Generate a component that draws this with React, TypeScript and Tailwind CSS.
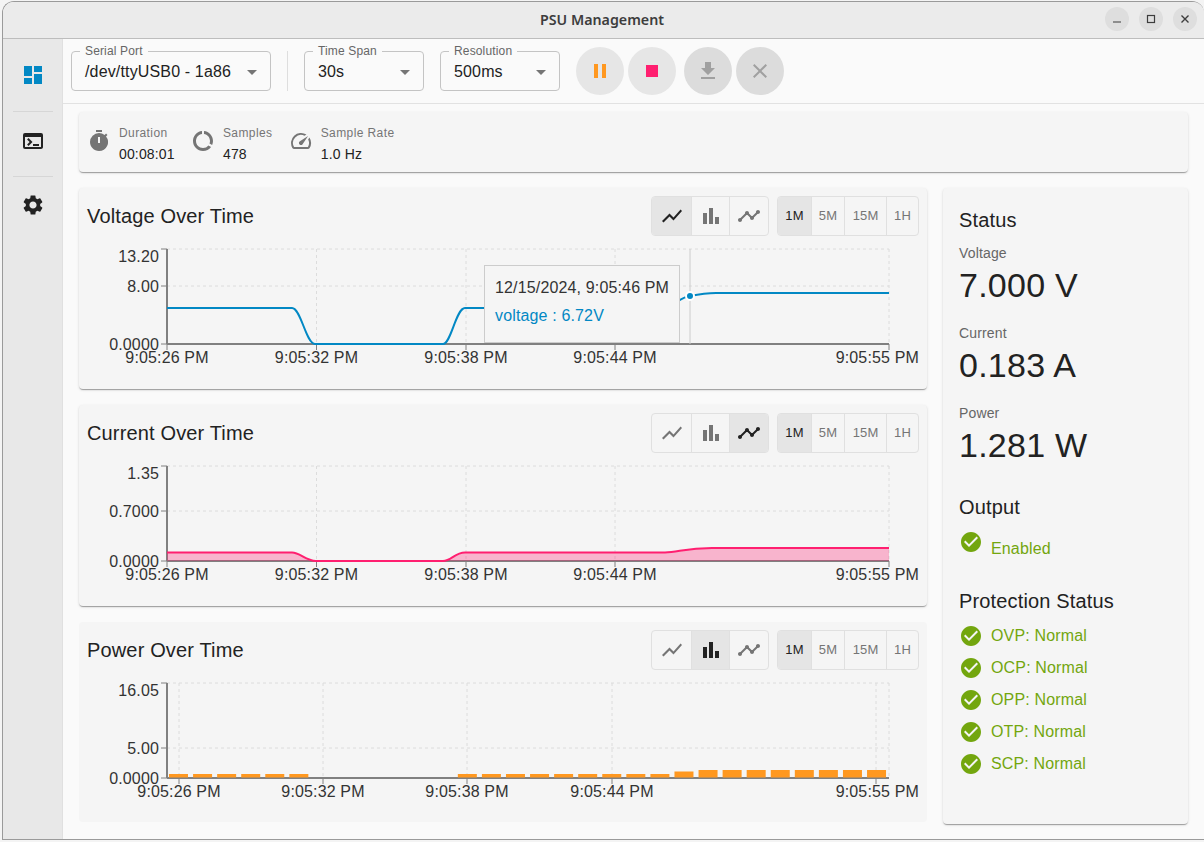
import React from 'react';
import {
  MdArrowDropDown,
  MdBarChart,
  MdCheckCircle,
  MdClose,
  MdDashboard,
  MdDataUsage,
  MdFileDownload,
  MdPause,
  MdSettings,
  MdShowChart,
  MdSpeed,
  MdStop,
  MdTerminal,
  MdTimeline,
  MdTimer,
} from 'react-icons/md';

const TIME_SPANS = ['1M', '5M', '15M', '1H'];
const PROTECTIONS = ['OVP', 'OCP', 'OPP', 'OTP', 'SCP'];

function SelectBox({ label, value, width }: { label: string; value: string; width: string }) {
  return (
    <div className={`relative flex h-10 items-center justify-between rounded border border-[#c4c4c4] pl-[13px] pr-[6px] pt-[2px] ${width}`}>
      <span className="absolute -top-[8px] left-[8px] bg-[#fafafa] px-[5px] text-[12px] leading-[14px] text-[#666]">{label}</span>
      <span className="text-[16px] text-[#222]">{value}</span>
      <MdArrowDropDown size={24} className="text-[#757575]" />
    </div>
  );
}

function RoundButton({ children, disabled }: { children: React.ReactNode; disabled?: boolean }) {
  return (
    <button className={`flex h-12 w-12 items-center justify-center rounded-full ${disabled ? 'bg-[#dcdcdc]' : 'bg-[#e6e6e6]'}`}>
      {children}
    </button>
  );
}

function Stat({ icon, label, value }: { icon: React.ReactNode; label: string; value: string }) {
  return (
    <div className="flex items-center gap-2">
      <span className="mb-[2px] text-[#757575]">{icon}</span>
      <div className="flex flex-col pt-[4px]">
        <span className="text-[12px] leading-[18px] tracking-[0.4px] text-[#757575]">{label}</span>
        <span className="mt-[2px] text-[14px] leading-[20px] text-[#222]">{value}</span>
      </div>
    </div>
  );
}

function ChartType({ active }: { active: number }) {
  const icons = [MdShowChart, MdBarChart, MdTimeline];
  const widths = ['w-[39px]', 'w-[38px]', 'w-[39px]'];
  return (
    <div className="flex h-10 overflow-hidden rounded border border-[#e0e0e0]">
      {icons.map((Icon, i) => (
        <div
          key={i}
          className={`flex items-center justify-center ${widths[i]} ${i > 0 ? 'border-l border-[#e0e0e0]' : ''} ${active === i ? 'bg-[#e5e5e5] text-[#222]' : 'text-[#757575]'}`}
        >
          <Icon size={24} />
        </div>
      ))}
    </div>
  );
}

function SpanGroup() {
  const widths = ['w-[33px]', 'w-[33px]', 'w-[42px]', 'w-[32px]'];
  return (
    <div className="flex h-10 overflow-hidden rounded border border-[#e0e0e0]">
      {TIME_SPANS.map((s, i) => (
        <div
          key={s}
          className={`flex items-center justify-center text-[13px] ${widths[i]} ${i > 0 ? 'border-l border-[#e0e0e0]' : ''} ${i === 0 ? 'bg-[#e5e5e5] text-[#222]' : 'text-[#757575]'}`}
        >
          {s}
        </div>
      ))}
    </div>
  );
}

type Tick = { y: number; label: string; textY: number };

function Axes({ top, bottom, yTicks, xTicks, gridX, labelY }: { top: number; bottom: number; yTicks: Tick[]; xTicks: number[]; gridX: number[]; labelY: number }) {
  const labels = ['9:05:26 PM', '9:05:32 PM', '9:05:38 PM', '9:05:44 PM'];
  return (
    <g>
      {yTicks.filter((t) => t.y !== bottom).map((t) => (
        <line key={t.y} x1={167} x2={889} y1={t.y} y2={t.y} stroke="#dcdcdc" strokeDasharray="3 3" />
      ))}
      {gridX.map((x) => (
        <line key={x} x1={x} x2={x} y1={top} y2={bottom} stroke="#dcdcdc" strokeDasharray="3 3" />
      ))}
      <line x1={167} x2={167} y1={top} y2={bottom} stroke="#808080" strokeWidth={2} />
      <line x1={167} x2={889} y1={bottom} y2={bottom} stroke="#808080" strokeWidth={2} />
      {yTicks.map((t) => (
        <g key={t.label}>
          <line x1={161} x2={167} y1={t.y} y2={t.y} stroke="#808080" />
          <text x={159} y={t.textY} textAnchor="end" className="fill-[#333] text-[16px]">{t.label}</text>
        </g>
      ))}
      {xTicks.map((x, i) => (
        <g key={x}>
          <line x1={x} x2={x} y1={bottom} y2={bottom + 6} stroke="#808080" />
          {i < 4 && <text x={x} y={labelY} textAnchor="middle" className="fill-[#333] text-[16px]">{labels[i]}</text>}
        </g>
      ))}
      <text x={919} y={labelY} textAnchor="end" className="fill-[#333] text-[16px]">9:05:55 PM</text>
    </g>
  );
}

function ChartCard({ title, active, height, base, children, overlay, flat }: { title: string; active: number; height: string; base: number; children: React.ReactNode; overlay?: React.ReactNode; flat?: boolean }) {
  return (
    <div className={`relative flex flex-col rounded bg-[#f5f5f5] ${height} ${flat ? '' : 'shadow-[0_2px_1px_-1px_rgba(0,0,0,0.2),0_1px_1px_0_rgba(0,0,0,0.14),0_1px_3px_0_rgba(0,0,0,0.12)]'}`}>
      <div className="flex items-center justify-between px-2 pt-2">
        <h2 className="text-[20px] text-[#222]">{title}</h2>
        <div className="flex gap-2">
          <ChartType active={active} />
          <SpanGroup />
        </div>
      </div>
      <svg viewBox={`79 ${base} 848 140`} width={848} height={140} className="mt-1 block">
        {children}
      </svg>
      {overlay}
    </div>
  );
}

const powerBars = (() => {
  const bars: { x: number; h: number }[] = [];
  for (let i = 0; i < 30; i++) {
    if (i > 5 && i < 12) continue;
    const h = i < 21 ? 3.5 : i === 21 ? 6 : 7.5;
    bars.push({ x: 169 + i * 24.07, h });
  }
  return bars;
})();

function StatusValue({ label, value }: { label: string; value: string }) {
  return (
    <div className="h-[80px]">
      <div className="text-[14px] leading-[20px] text-[#666]">{label}</div>
      <div className="mt-[1px] text-[34px] leading-[42px] tracking-[0.25px] text-[#222]">{value}</div>
    </div>
  );
}

export default function App() {
  return (
    <div className="h-[842px] w-[1204px] overflow-hidden bg-[#f4f4f4] pl-[2px] pt-[1px] font-['Liberation_Sans',Arial,sans-serif] tracking-[0.15px]">
      <div className="flex h-[839px] w-[1202px] flex-col overflow-hidden rounded-t-[12px] border border-r-0 border-[#9a9a9a] bg-[#fafafa]">
        {/* title bar */}
        <div className="relative flex h-[37px] shrink-0 items-center justify-center border-b border-[#bdbdbd] bg-[#ebebeb]">
          <span className="pr-[3px] font-['Noto_Sans',sans-serif] text-[14.25px] font-semibold tracking-normal text-[#3d3d3d]">PSU Management</span>
          <div className="absolute right-[7px] top-[5px] flex gap-[10px]">
            <span className="flex h-6 w-6 items-center justify-center rounded-full bg-[#dedede]">
              <svg width="10" height="10" viewBox="0 0 10 10"><path d="M1 8h8" stroke="#3d3d3d" strokeWidth="1.2" /></svg>
            </span>
            <span className="flex h-6 w-6 items-center justify-center rounded-full bg-[#dedede]">
              <svg width="10" height="10" viewBox="0 0 10 10"><rect x="1.5" y="1.5" width="7" height="7" fill="none" stroke="#3d3d3d" strokeWidth="1.2" /></svg>
            </span>
            <span className="flex h-6 w-6 items-center justify-center rounded-full bg-[#dedede]">
              <svg width="10" height="10" viewBox="0 0 10 10"><path d="M1.5 1.5l7 7M8.5 1.5l-7 7" stroke="#3d3d3d" strokeWidth="1.4" /></svg>
            </span>
          </div>
        </div>

        <div className="flex min-h-0 flex-1">
          {/* sidebar */}
          <aside className="flex w-[60px] shrink-0 flex-col items-center border-r border-[#e0e0e0] bg-[#e8e8e8]">
            <div className="flex h-[72px] w-full items-center justify-center text-[#0288c4]">
              <MdDashboard size={24} />
            </div>
            <div className="h-px w-10 bg-[#d6d6d6]" />
            <div className="flex h-[64px] items-center justify-center pb-[7px] text-[#222]"><MdTerminal size={24} /></div>
            <div className="h-px w-10 bg-[#d6d6d6]" />
            <div className="flex h-[56px] items-center justify-center text-[#222]"><MdSettings size={24} /></div>
          </aside>

          <main className="flex min-w-0 flex-1 flex-col">
            {/* toolbar */}
            <div className="flex h-[65px] shrink-0 items-center border-b border-[#e2e2e2] pl-2">
              <SelectBox label="Serial Port" value="/dev/ttyUSB0 - 1a86" width="w-[200px]" />
              <div className="mx-4 h-10 w-px bg-[#dedede]" />
              <SelectBox label="Time Span" value="30s" width="w-[120px]" />
              <div className="w-4" />
              <SelectBox label="Resolution" value="500ms" width="w-[120px]" />
              <div className="ml-4 flex gap-1">
                <RoundButton><MdPause size={24} className="text-[#ff9820]" /></RoundButton>
                <RoundButton><MdStop size={24} className="text-[#ff1f70]" /></RoundButton>
              </div>
              <div className="ml-2 flex gap-1">
                <RoundButton disabled><MdFileDownload size={24} className="text-[#a0a0a0]" /></RoundButton>
                <RoundButton disabled><MdClose size={24} className="text-[#a0a0a0]" /></RoundButton>
              </div>
            </div>

            {/* content */}
            <div className="flex flex-col px-4 pt-2">
              <div className="flex h-[60px] items-center gap-[16.25px] rounded bg-[#f5f5f5] pl-2 shadow-[0_2px_1px_-1px_rgba(0,0,0,0.2),0_1px_1px_0_rgba(0,0,0,0.14),0_1px_3px_0_rgba(0,0,0,0.12)]">
                <Stat icon={<MdTimer size={24} />} label="Duration" value="00:08:01" />
                <Stat icon={<MdDataUsage size={24} />} label="Samples" value="478" />
                <Stat icon={<MdSpeed size={24} />} label="Sample Rate" value="1.0 Hz" />
              </div>

              <div className="mt-4 flex gap-4">
                <div className="flex w-[848px] shrink-0 flex-col gap-4">
                  <ChartCard
                    title="Voltage Over Time"
                    active={0}
                    height="h-[201px]"
                    base={240}
                    overlay={
                      <div className="absolute left-[405px] top-[77px] flex h-[78px] w-[196px] flex-col border border-[#ccc] bg-[#f5f5f5] pl-[10px] pt-[10px] text-[16px] leading-[24px]">
                        <span className="text-[#333]">12/15/2024, 9:05:46 PM</span>
                        <span className="mt-[4px] text-[#0288c4]">voltage : 6.72V</span>
                      </div>
                    }
                  >
                    <Axes
                      top={249}
                      bottom={344}
                      labelY={363}
                      yTicks={[
                        { y: 249, label: '13.20', textY: 262 },
                        { y: 286, label: '8.00', textY: 292 },
                        { y: 344, label: '0.0000', textY: 350 },
                      ]}
                      xTicks={[167, 316.5, 466, 615, 889]}
                      gridX={[316.5, 466, 615, 889]}
                    />
                    <line x1={690} x2={690} y1={249} y2={344} stroke="#ccc" />
                    <path
                      d="M167 308L292 308C301 308 306 344 315 344L443 344C451 344 456 308 465 308L660 308C672 308 680 297 690 296C700 294 705 293 716 293L889 293"
                      fill="none"
                      stroke="#0288c4"
                      strokeWidth={2}
                    />
                    <circle cx={690} cy={296} r={4} fill="#0288c4" stroke="#fff" strokeWidth={2} />
                  </ChartCard>

                  <ChartCard title="Current Over Time" active={2} height="h-[201px]" base={457}>
                    <Axes
                      top={466}
                      bottom={561}
                      labelY={580}
                      yTicks={[
                        { y: 466, label: '1.35', textY: 479 },
                        { y: 511, label: '0.7000', textY: 517 },
                        { y: 561, label: '0.0000', textY: 567 },
                      ]}
                      xTicks={[167, 316.5, 466, 615, 889]}
                      gridX={[316.5, 466, 615, 889]}
                    />
                    <path
                      d="M167 552.5L292 552.5C300 552.5 306 561 316 561L443 561C451 561 455 552.5 465 552.5L665 552.5C678 552.5 685 548 712 548L889 548L889 561L167 561Z"
                      fill="#ff1f70"
                      fillOpacity={0.3}
                    />
                    <path
                      d="M167 552.5L292 552.5C300 552.5 306 561 316 561L443 561C451 561 455 552.5 465 552.5L665 552.5C678 552.5 685 548 712 548L889 548"
                      fill="none"
                      stroke="#ff1f70"
                      strokeWidth={2}
                    />
                  </ChartCard>

                  <ChartCard title="Power Over Time" active={1} height="h-[200px]" base={674} flat>
                    <Axes
                      top={683}
                      bottom={778}
                      labelY={797}
                      yTicks={[
                        { y: 683, label: '16.05', textY: 696 },
                        { y: 748, label: '5.00', textY: 754 },
                        { y: 778, label: '0.0000', textY: 784 },
                      ]}
                      xTicks={[179, 323, 467, 612, 876]}
                      gridX={[179, 323, 467, 612, 876, 889]}
                    />
                    {powerBars.map((b) => (
                      <rect key={b.x} x={b.x} y={777.5 - b.h} width={19} height={b.h} fill="#ff9820" />
                    ))}
                  </ChartCard>
                </div>

                {/* status panel */}
                <div className="h-[636px] w-[245px] shrink-0 rounded bg-[#f5f5f5] px-4 pt-[20px] shadow-[0_2px_1px_-1px_rgba(0,0,0,0.2),0_1px_1px_0_rgba(0,0,0,0.14),0_1px_3px_0_rgba(0,0,0,0.12)]">
                  <h3 className="mb-[11px] text-[20px] leading-[24px] text-[#222]">Status</h3>
                  <StatusValue label="Voltage" value="7.000 V" />
                  <StatusValue label="Current" value="0.183 A" />
                  <StatusValue label="Power" value="1.281 W" />
                  <h3 className="mt-[12px] text-[20px] leading-[24px] text-[#222]">Output</h3>
                  <div className="mt-[11px] flex h-[30px] items-start gap-2 text-[#73a60e]">
                    <MdCheckCircle size={24} />
                    <span className="mt-[10px] text-[16px] leading-[18px]">Enabled</span>
                  </div>
                  <h3 className="mt-[29px] text-[20px] leading-[24px] text-[#222]">Protection Status</h3>
                  <div className="mt-[7px] flex flex-col">
                    {PROTECTIONS.map((p) => (
                      <div key={p} className="flex h-8 items-center gap-2 text-[#73a60e]">
                        <MdCheckCircle size={24} />
                        <span className="text-[16px]">{p}: Normal</span>
                      </div>
                    ))}
                  </div>
                </div>
              </div>
            </div>
          </main>
        </div>
      </div>
    </div>
  );
}
